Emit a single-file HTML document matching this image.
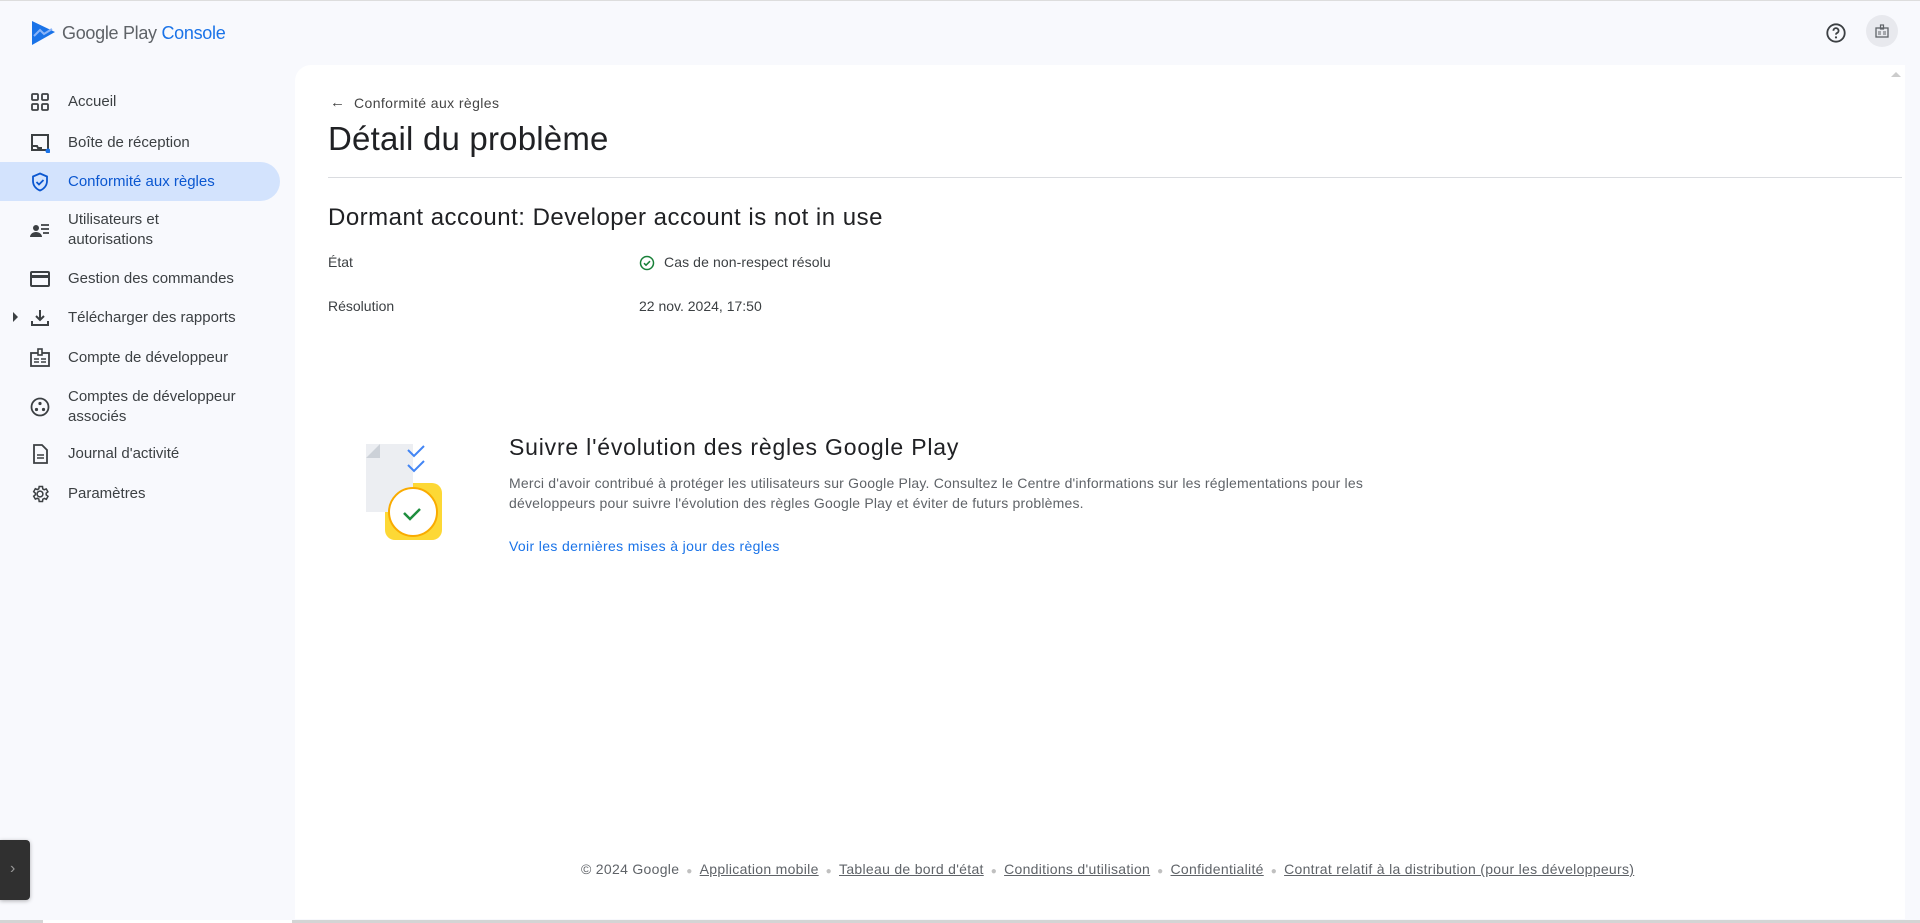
<!DOCTYPE html>
<html><head><meta charset="utf-8"><style>
*{margin:0;padding:0;box-sizing:border-box}
body{width:1920px;height:923px;background:#f8f9fd;font-family:"Liberation Sans",sans-serif;position:relative;overflow:hidden;color:#3c4043}
.topline{position:absolute;left:0;top:0;width:1920px;height:1px;background:#ddd}
.logo{position:absolute;left:30px;top:20px}
.logotext{position:absolute;left:62px;top:23px;font-size:18px;color:#5f6368;letter-spacing:-0.3px}
.logotext span{color:#1a73e8}
.nav{position:absolute;left:0;font-size:15px;color:#3c4043}
.nav .ic{position:absolute;left:30px;width:20px;height:20px}
.nav .t{position:absolute;left:68px;white-space:nowrap;line-height:20px}
.sel{position:absolute;left:0;top:162px;width:280px;height:39px;background:#d3e3fd;border-radius:0 20px 20px 0}
.panel{position:absolute;left:295px;top:65px;width:1610px;height:854px;background:#fff;border-radius:16px 0 0 0}
.abs{position:absolute;white-space:nowrap}
.foot a{color:#5f6368;text-decoration:underline}
.dot{color:#c0c0c0;margin:0 7px;font-size:10px}
</style></head><body>
<div class="topline"></div>
<svg class="logo" width="26" height="26" viewBox="0 0 26 26"><path d="M2 1 L25 12 L2 25 Z" fill="#1a73e8"/><path d="M4 16 L10 10 L14 14 L22 9" stroke="#8ab4f8" stroke-width="2" fill="none"/></svg>
<div class="logotext">Google Play <span>Console</span></div>

<svg class="abs" style="left:1825px;top:22px" width="22" height="22" viewBox="0 0 24 24"><circle cx="12" cy="12" r="9.5" fill="none" stroke="#3c4043" stroke-width="2"/><path d="M9.2 9.5a2.8 2.8 0 1 1 3.8 2.6c-.8.4-1 .9-1 1.7" fill="none" stroke="#3c4043" stroke-width="2"/><circle cx="12" cy="16.8" r="1.2" fill="#3c4043"/></svg>
<div class="abs" style="left:1866px;top:15px;width:32px;height:32px;border-radius:50%;background:#e8e9ee"></div>
<svg class="abs" style="left:1874px;top:23px" width="16" height="16" viewBox="0 0 16 16"><rect x="2" y="5" width="12" height="9" fill="none" stroke="#5f6368" stroke-width="1.3"/><rect x="6.5" y="2" width="3" height="4" fill="none" stroke="#5f6368" stroke-width="1.2"/><path d="M4 9h3M4 11h3M9 9h3M9 11h3" stroke="#5f6368"/></svg>

<div class="sel"></div>
<div class="nav" style="top:2px">
<svg class="ic" style="top:90px" viewBox="0 0 20 20"><g fill="none" stroke="#3c4043" stroke-width="1.8"><rect x="2" y="2" width="6" height="6" rx="1"/><rect x="12" y="2" width="6" height="6" rx="1"/><rect x="2" y="12" width="6" height="6" rx="1"/><rect x="12" y="12" width="6" height="6" rx="1"/></g></svg>
<div class="t" style="top:90px">Accueil</div>
<svg class="ic" style="top:131px" viewBox="0 0 20 20"><rect x="2" y="2" width="16" height="15" fill="none" stroke="#3c4043" stroke-width="2"/><path d="M2 13h5l1 2h4" stroke="#3c4043" stroke-width="2" fill="none"/><circle cx="18" cy="18" r="2.5" fill="#1a73e8"/></svg>
<div class="t" style="top:131px">Boîte de réception</div>
<svg class="ic" style="top:170px" viewBox="0 0 20 20"><path d="M10 1.5 L17 4.5 V9 c0 4.5-3 8-7 9.5 C6 17 3 13.5 3 9 V4.5 Z" fill="none" stroke="#0b57d0" stroke-width="1.8"/><path d="M6.5 10 l2.5 2.5 l4.5-4.5" fill="none" stroke="#0b57d0" stroke-width="1.8"/></svg>
<div class="t" style="top:170px;color:#0b57d0">Conformité aux règles</div>
<svg class="ic" style="top:218px" viewBox="0 0 20 20"><circle cx="6" cy="8" r="3" fill="#3c4043"/><path d="M0 17c0-3 3-5 6-5s6 2 6 5z" fill="#3c4043"/><path d="M11 5h8M11 9h8M13 13h6" stroke="#3c4043" stroke-width="1.8"/></svg>
<div class="t" style="top:208px">Utilisateurs et<br>autorisations</div>
<svg class="ic" style="top:267px" viewBox="0 0 20 20"><rect x="1" y="3" width="18" height="14" rx="1" fill="none" stroke="#3c4043" stroke-width="2"/><rect x="1" y="6" width="18" height="3" fill="#3c4043"/></svg>
<div class="t" style="top:267px">Gestion des commandes</div>
<div class="abs" style="left:13px;top:310px;width:0;height:0;border-left:5px solid #3c4043;border-top:5px solid transparent;border-bottom:5px solid transparent"></div>
<svg class="ic" style="top:306px" viewBox="0 0 20 20"><path d="M10 2v10M6 8l4 4 4-4M2 13v4h16v-4" fill="none" stroke="#3c4043" stroke-width="2"/></svg>
<div class="t" style="top:306px">Télécharger des rapports</div>
<svg class="ic" style="top:346px" viewBox="0 0 20 20"><rect x="1" y="5" width="18" height="13" fill="none" stroke="#3c4043" stroke-width="1.8"/><rect x="8" y="1" width="4" height="6" fill="#fff" stroke="#3c4043" stroke-width="1.6"/><path d="M4 11h5M4 14h5M11 11h5M11 14h5" stroke="#3c4043" stroke-width="1.5"/></svg>
<div class="t" style="top:346px">Compte de développeur</div>
<svg class="ic" style="top:395px" viewBox="0 0 20 20"><circle cx="10" cy="10" r="8.5" fill="none" stroke="#3c4043" stroke-width="1.8"/><circle cx="10" cy="6.5" r="1.6" fill="#3c4043"/><circle cx="6.5" cy="12.5" r="1.6" fill="#3c4043"/><circle cx="13.5" cy="12.5" r="1.6" fill="#3c4043"/></svg>
<div class="t" style="top:385px">Comptes de développeur<br>associés</div>
<svg class="ic" style="top:442px" viewBox="0 0 20 20"><path d="M4 1h8l5 5v13H4z" fill="none" stroke="#3c4043" stroke-width="1.8"/><path d="M7 11h7M7 14h7" stroke="#3c4043" stroke-width="1.6"/></svg>
<div class="t" style="top:442px">Journal d'activité</div>
<svg class="ic" style="top:482px" viewBox="0 0 24 24"><path d="M12 8.5a3.5 3.5 0 1 0 0 7 3.5 3.5 0 0 0 0-7zM19.4 13a7.5 7.5 0 0 0 0-2l2.1-1.6-2-3.5-2.5 1a7.5 7.5 0 0 0-1.7-1L15 3h-4l-.4 2.7a7.5 7.5 0 0 0-1.7 1l-2.5-1-2 3.5L6.5 11a7.5 7.5 0 0 0 0 2l-2.1 1.6 2 3.5 2.5-1a7.5 7.5 0 0 0 1.7 1L11 21h4l.4-2.7a7.5 7.5 0 0 0 1.7-1l2.5 1 2-3.5z" fill="none" stroke="#3c4043" stroke-width="1.8"/></svg>
<div class="t" style="top:482px">Paramètres</div>
</div>

<div class="panel"></div>
<div class="abs" style="left:1891px;top:72px;width:0;height:0;border-left:5px solid transparent;border-right:5px solid transparent;border-bottom:5px solid #ccc"></div>

<div class="abs" style="left:330px;top:94px;font-size:15px;color:#444">←</div>
<div class="abs" style="left:354px;top:95px;font-size:14px;color:#444;letter-spacing:0.4px">Conformité aux règles</div>
<div class="abs" style="left:328px;top:120px;font-size:33px;color:#202124;letter-spacing:0.2px">Détail du problème</div>
<div class="abs" style="left:328px;top:177px;width:1574px;height:1px;background:#dadce0"></div>
<div class="abs" style="left:328px;top:204px;font-size:24px;color:#202124;letter-spacing:0.5px">Dormant account: Developer account is not in use</div>
<div class="abs" style="left:328px;top:254px;font-size:14px;color:#3c4043">État</div>
<svg class="abs" style="left:639px;top:255px" width="16" height="16" viewBox="0 0 16 16"><circle cx="8" cy="8" r="6.5" fill="none" stroke="#188038" stroke-width="1.5"/><path d="M5 8.2l2 2 4-4" fill="none" stroke="#188038" stroke-width="1.5"/></svg>
<div class="abs" style="left:664px;top:254px;font-size:14px;color:#3c4043;letter-spacing:0.1px">Cas de non-respect résolu</div>
<div class="abs" style="left:328px;top:298px;font-size:14px;color:#3c4043;letter-spacing:0px">Résolution</div>
<div class="abs" style="left:639px;top:298px;font-size:14px;color:#3c4043;letter-spacing:0px">22 nov. 2024, 17:50</div>

<svg class="abs" style="left:360px;top:440px" width="90" height="105" viewBox="0 0 90 105">
<path d="M6 4h47v68H6V18z" fill="#eceef2"/><path d="M6 18L20 4v14z" fill="#ccd1d8"/>
<path d="M48 10l6 6 10-10M48 25l6 6 10-10" fill="none" stroke="#4285f4" stroke-width="2"/>
<rect x="25" y="43" width="57" height="57" rx="10" fill="#fdd835"/>
<rect x="25" y="43" width="28" height="29" fill="#eceef2"/>
<circle cx="53" cy="72" r="24" fill="#fff" stroke="#f9ab00" stroke-width="2"/>
<path d="M44 73l6 6 10-10" fill="none" stroke="#1e8e3e" stroke-width="2.5"/>
</svg>
<div class="abs" style="left:509px;top:434px;font-size:23px;color:#202124;letter-spacing:0.8px">Suivre l'évolution des règles Google Play</div>
<div class="abs" style="left:509px;top:473px;font-size:14px;color:#5f6368;line-height:20px;letter-spacing:0.2px">Merci d'avoir contribué à protéger les utilisateurs sur Google Play. Consultez le Centre d'informations sur les réglementations pour les<br>développeurs pour suivre l'évolution des règles Google Play et éviter de futurs problèmes.</div>
<div class="abs" style="left:509px;top:538px;font-size:14px;color:#1a73e8;letter-spacing:0.35px">Voir les dernières mises à jour des règles</div>

<div class="abs foot" style="left:581px;top:861px;font-size:14px;color:#5f6368;letter-spacing:0.3px">© 2024 Google<span class="dot">●</span><a>Application mobile</a><span class="dot">●</span><a>Tableau de bord d'état</a><span class="dot">●</span><a>Conditions d'utilisation</a><span class="dot">●</span><a>Confidentialité</a><span class="dot">●</span><a>Contrat relatif à la distribution (pour les développeurs)</a></div>

<div class="abs" style="left:0;top:840px;width:30px;height:60px;background:#303030;border-radius:0 4px 4px 0;box-shadow:0 1px 4px rgba(0,0,0,.3)"></div>
<div class="abs" style="left:10px;top:860px;color:#999;font-size:16px">›</div>
<div class="abs" style="left:0;top:920px;width:1920px;height:3px;background:#d4d4d4"></div>
<div class="abs" style="left:43px;top:920px;width:249px;height:3px;background:#fff"></div>
</body></html>
